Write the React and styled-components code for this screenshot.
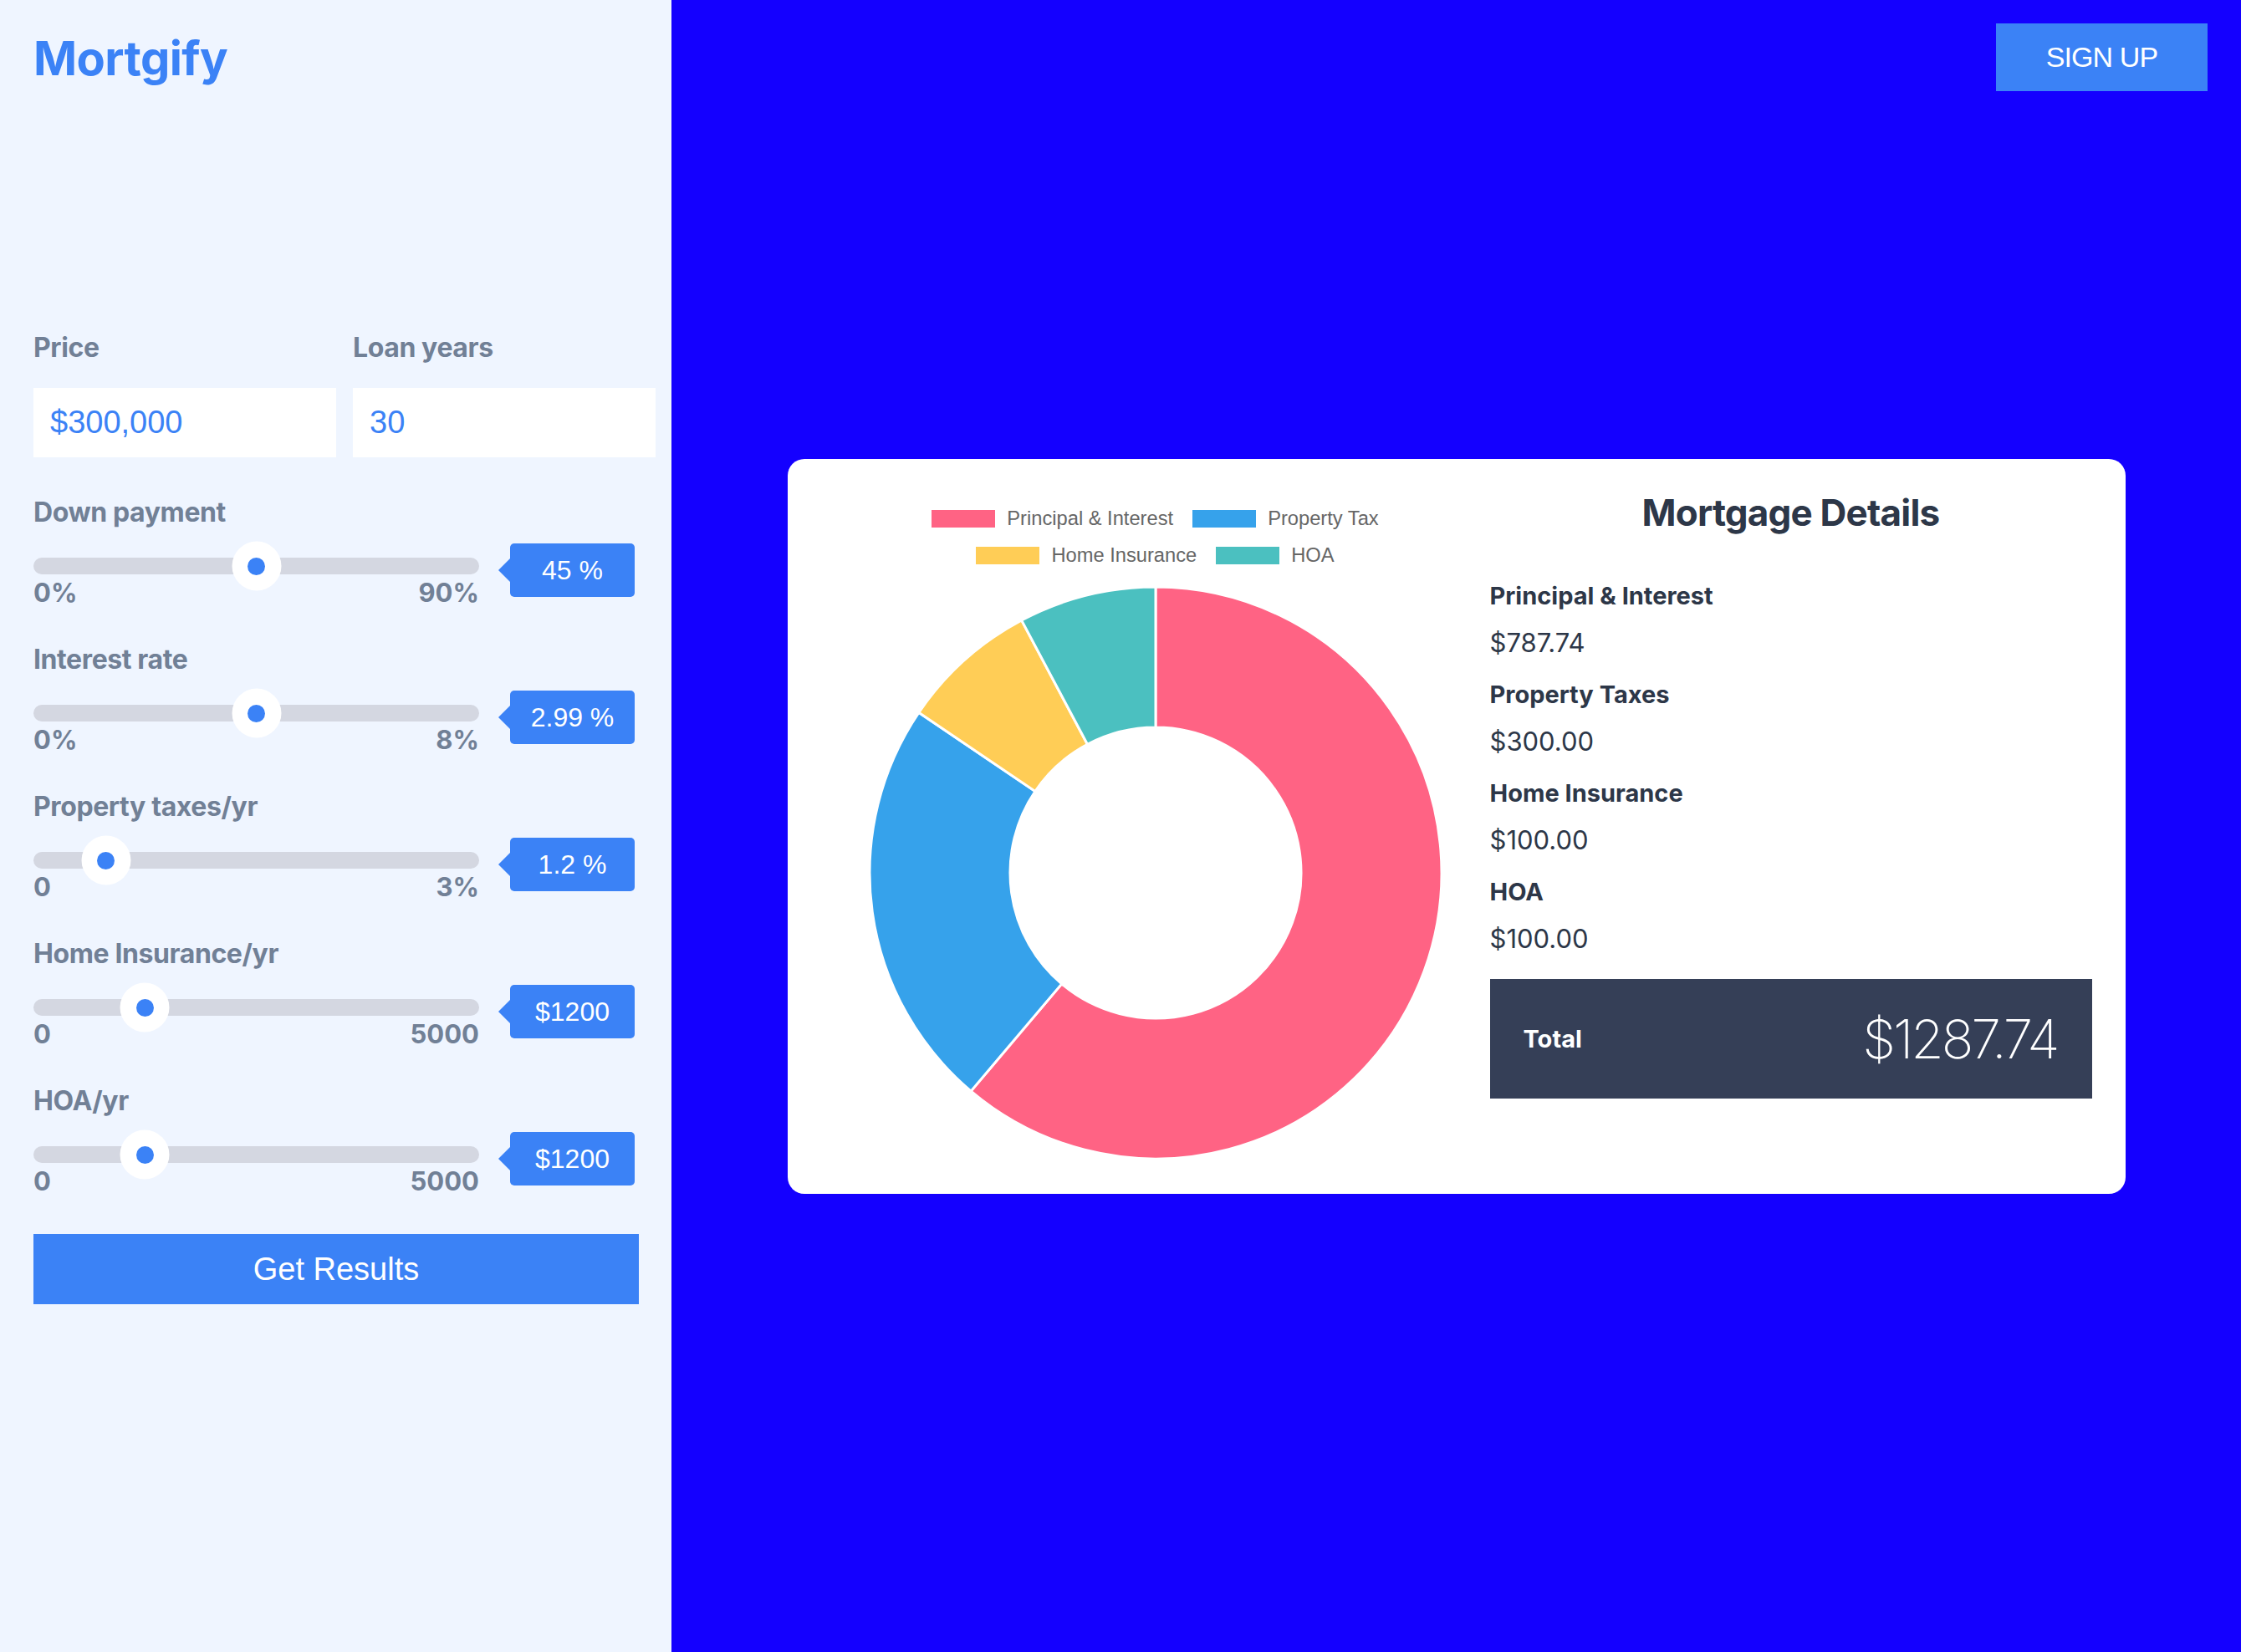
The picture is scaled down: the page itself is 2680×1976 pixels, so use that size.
import React from "react";
import styled, { createGlobalStyle } from "styled-components";

const GlobalStyle = createGlobalStyle`
  * { box-sizing: border-box; }
  body {
    margin: 0;
    font-family: Inter, "Noto Sans", sans-serif;
  }
`;

const sliders = [
  { label: "Down payment", min: "0%", max: "90%", value: "45 %", pos: 0.5 },
  { label: "Interest rate", min: "0%", max: "8%", value: "2.99 %", pos: 0.5 },
  { label: "Property taxes/yr", min: "0", max: "3%", value: "1.2 %", pos: 0.163 },
  { label: "Home Insurance/yr", min: "0", max: "5000", value: "$1200", pos: 0.25 },
  { label: "HOA/yr", min: "0", max: "5000", value: "$1200", pos: 0.25 },
];

const chartData = [
  { label: "Principal & Interest", value: 787.74, color: "#ff6384" },
  { label: "Property Tax", value: 300, color: "#36a2eb" },
  { label: "Home Insurance", value: 100, color: "#ffcd56" },
  { label: "HOA", value: 100, color: "#4bc0c0" },
];

const details = [
  { label: "Principal & Interest", value: "$787.74" },
  { label: "Property Taxes", value: "$300.00" },
  { label: "Home Insurance", value: "$100.00" },
  { label: "HOA", value: "$100.00" },
];

function arcPath(c, R, r, a0, a1) {
  const p = (rad, a) => [c + rad * Math.sin(a), c - rad * Math.cos(a)];
  const large = a1 - a0 > Math.PI ? 1 : 0;
  const [x0, y0] = p(R, a0);
  const [x1, y1] = p(R, a1);
  const [x2, y2] = p(r, a1);
  const [x3, y3] = p(r, a0);
  return `M${x0} ${y0} A${R} ${R} 0 ${large} 1 ${x1} ${y1} L${x2} ${y2} A${r} ${r} 0 ${large} 0 ${x3} ${y3} Z`;
}

const Donut = ({ data, size }) => {
  const total = data.reduce((s, d) => s + d.value, 0);
  const c = size / 2;
  let a = 0;
  return (
    <svg width={size} height={size} viewBox={`0 0 ${size} ${size}`}>
      {data.map((d) => {
        const a0 = a;
        a += (d.value / total) * Math.PI * 2;
        return (
          <path
            key={d.label}
            d={arcPath(c, c - 1, 174, a0, a)}
            fill={d.color}
            stroke="#fff"
            strokeWidth="3"
          />
        );
      })}
    </svg>
  );
};

const App = () => {
  return (
    <>
      <GlobalStyle />
      <Page>
        <Sidebar>
          <Logo>Mortgify</Logo>
          <FieldRow>
            <Field>
              <Label>Price</Label>
              <Input defaultValue="$300,000" />
            </Field>
            <Field>
              <Label>Loan years</Label>
              <Input defaultValue="30" />
            </Field>
          </FieldRow>
          {sliders.map((s) => (
            <SliderGroup key={s.label}>
              <Label>{s.label}</Label>
              <SliderRow>
                <TrackCol>
                  <Track>
                    <Thumb style={{ left: `${s.pos * 100}%` }} />
                  </Track>
                  <MinMax>
                    <span>{s.min}</span>
                    <span>{s.max}</span>
                  </MinMax>
                </TrackCol>
                <Badge>{s.value}</Badge>
              </SliderRow>
            </SliderGroup>
          ))}
          <ResultsButton>Get Results</ResultsButton>
        </Sidebar>
        <Main>
          <Header>
            <SignUp>SIGN UP</SignUp>
          </Header>
          <Card>
            <ChartCol>
              <Legend>
                {[chartData.slice(0, 2), chartData.slice(2)].map((row, i) => (
                  <LegendRow key={i}>
                    {row.map((d) => (
                      <LegendItem key={d.label}>
                        <LegendBox $color={d.color} />
                        {d.label}
                      </LegendItem>
                    ))}
                  </LegendRow>
                ))}
              </Legend>
              <DonutWrap>
                <Donut data={chartData} size={686} />
              </DonutWrap>
            </ChartCol>
            <DetailsCol>
              <Title>Mortgage Details</Title>
              <DetailList>
                {details.map((d) => (
                  <DetailItem key={d.label}>
                    <DetailLabel>{d.label}</DetailLabel>
                    <DetailValue>{d.value}</DetailValue>
                  </DetailItem>
                ))}
              </DetailList>
              <TotalBox>
                <TotalLabel>Total</TotalLabel>
                <TotalAmount>$1287.74</TotalAmount>
              </TotalBox>
            </DetailsCol>
          </Card>
        </Main>
      </Page>
    </>
  );
};

export default App;

const Page = styled.div`
  display: flex;
  min-height: 1976px;
`;

const Sidebar = styled.aside`
  width: 803px;
  flex-shrink: 0;
  background: #eff5ff;
  padding: 38px 19px 0 40px;
  display: flex;
  flex-direction: column;
`;

const Logo = styled.h1`
  margin: 0;
  font-size: 56px;
  line-height: 64px;
  font-weight: 700;
  color: #3b82f6;
  letter-spacing: -0.6px;
`;

const FieldRow = styled.div`
  display: grid;
  grid-template-columns: 362px 362px;
  column-gap: 20px;
  margin-top: 296px;
`;

const Field = styled.div`
  display: flex;
  flex-direction: column;
`;

const Label = styled.div`
  font-size: 32px;
  line-height: 36px;
  font-weight: 700;
  color: #718096;
  letter-spacing: -0.4px;
`;

const Input = styled.input`
  margin-top: 30px;
  height: 83px;
  width: 100%;
  border: none;
  outline: none;
  background: #fff;
  padding: 0 20px;
  font-family: "Liberation Sans", Arial, sans-serif;
  font-size: 38px;
  color: #3b82f6;
`;

const SliderGroup = styled.div`
  margin-top: 50px;
  &:nth-of-type(2) {
    margin-top: 48px;
  }
`;

const SliderRow = styled.div`
  display: flex;
  align-items: flex-start;
  margin-top: 19px;
`;

const TrackCol = styled.div`
  width: 533px;
  padding-top: 17px;
`;

const Track = styled.div`
  position: relative;
  height: 20px;
  border-radius: 10px;
  background: #d4d7e1;
`;

const Thumb = styled.div`
  position: absolute;
  top: 50%;
  width: 59px;
  height: 59px;
  border-radius: 50%;
  background: #fff;
  transform: translate(-50%, -50%);
  &::after {
    content: "";
    position: absolute;
    left: 50%;
    top: 50%;
    width: 21px;
    height: 21px;
    border-radius: 50%;
    background: #3b82f6;
    transform: translate(-50%, -50%);
  }
`;

const MinMax = styled.div`
  display: flex;
  justify-content: space-between;
  margin-top: 10px;
  font-size: 31px;
  line-height: 24px;
  font-weight: 700;
  color: #718096;
`;

const Badge = styled.div`
  position: relative;
  margin-left: 37px;
  width: 149px;
  height: 64px;
  border-radius: 5px;
  background: #3b82f6;
  color: #fff;
  font-family: "Liberation Sans", Arial, sans-serif;
  font-size: 32px;
  line-height: 64px;
  text-align: center;
  &::before {
    content: "";
    position: absolute;
    left: -14px;
    top: 50%;
    transform: translateY(-50%);
    border-top: 14px solid transparent;
    border-bottom: 14px solid transparent;
    border-right: 14px solid #3b82f6;
  }
`;

const ResultsButton = styled.button`
  margin-top: 51px;
  width: 724px;
  height: 84px;
  border: none;
  background: #3b82f6;
  color: #fff;
  font-family: "Liberation Sans", Arial, sans-serif;
  font-size: 38px;
  cursor: pointer;
`;

const Main = styled.main`
  flex: 1;
  background: #1400ff;
  display: grid;
  grid-template-rows: 1fr auto 1fr;
  justify-items: center;
`;

const Header = styled.header`
  justify-self: stretch;
  display: flex;
  justify-content: flex-end;
  align-items: flex-start;
  padding: 28px 40px 0 0;
`;

const SignUp = styled.button`
  width: 253px;
  height: 81px;
  border: none;
  background: #3b82f6;
  color: #fff;
  font-family: "Liberation Sans", Arial, sans-serif;
  font-size: 34px;
  letter-spacing: -0.9px;
  cursor: pointer;
`;

const Card = styled.section`
  width: 1600px;
  background: #fff;
  border-radius: 20px;
  padding: 40px 40px 41px 40px;
  display: flex;
`;

const ChartCol = styled.div`
  width: 800px;
  display: flex;
  flex-direction: column;
  align-items: center;
`;

const Legend = styled.div`
  padding-top: 10px;
`;

const LegendRow = styled.div`
  display: flex;
  justify-content: center;
  align-items: center;
  gap: 23px;
  height: 44px;
`;

const LegendItem = styled.div`
  display: flex;
  align-items: center;
  gap: 14px;
  font-family: "Liberation Sans", Arial, sans-serif;
  font-size: 23.7px;
  color: #666;
`;

const LegendBox = styled.span`
  width: 76px;
  height: 21px;
  background: ${(p) => p.$color};
`;

const DonutWrap = styled.div`
  margin-top: 14px;
  line-height: 0;
`;

const DetailsCol = styled.div`
  flex: 1;
  display: flex;
  flex-direction: column;
  color: #2d3748;
`;

const Title = styled.h2`
  margin: 0;
  text-align: center;
  font-size: 44px;
  line-height: 48px;
  font-weight: 700;
  letter-spacing: -0.8px;
`;

const DetailList = styled.div`
  margin-top: 58px;
`;

const DetailItem = styled.div`
  & + & {
    margin-top: 26px;
  }
`;

const DetailLabel = styled.div`
  font-size: 29px;
  line-height: 36px;
  font-weight: 700;
  letter-spacing: 0;
`;

const DetailValue = styled.div`
  margin-top: 20px;
  font-size: 31px;
  line-height: 36px;
  font-weight: 400;
`;

const TotalBox = styled.div`
  margin-top: 30px;
  height: 143px;
  background: #353f57;
  color: #fff;
  display: flex;
  justify-content: space-between;
  align-items: center;
  padding: 0 41px 0 40px;
`;

const TotalLabel = styled.span`
  font-size: 29px;
  font-weight: 700;
`;

const TotalAmount = styled.span`
  font-size: 64px;
  font-weight: 200;
  letter-spacing: -3px;
`;
